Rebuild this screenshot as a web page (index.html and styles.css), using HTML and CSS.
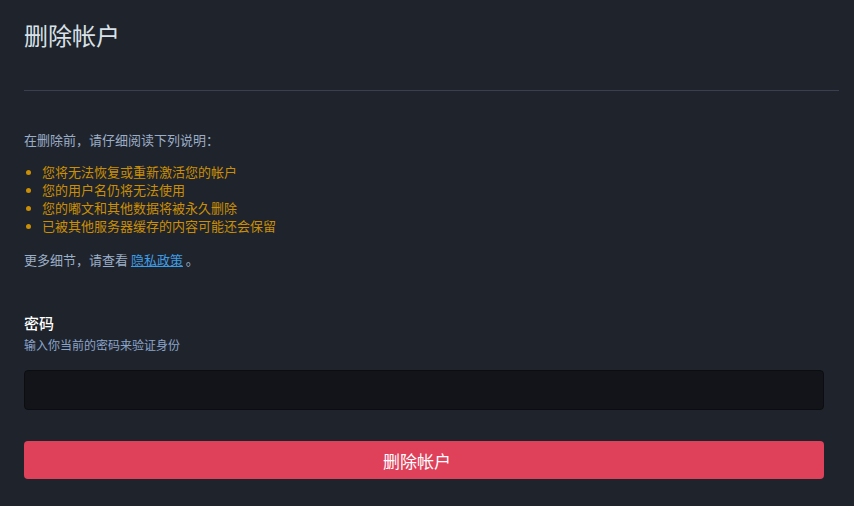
FILE: index.html
```html
<!DOCTYPE html>
<html lang="zh-CN">
<head>
<meta charset="utf-8">
<title>删除帐户</title>
<link rel="stylesheet" href="styles.css">
</head>
<body>
<div class="page">
  <h2 class="title">删除帐户</h2>
  <hr class="divider">
  <p class="intro">在删除前，请仔细阅读下列说明：</p>
  <ul class="warnings">
    <li>您将无法恢复或重新激活您的帐户</li>
    <li>您的用户名仍将无法使用</li>
    <li>您的嘟文和其他数据将被永久删除</li>
    <li>已被其他服务器缓存的内容可能还会保留</li>
  </ul>
  <p class="more">更多细节，请查看 <a href="#" class="link">隐私政策</a> 。</p>
  <form class="form">
    <label class="label">密码</label>
    <div class="hint">输入你当前的密码来验证身份</div>
    <input class="input" type="password">
    <button class="btn" type="button">删除帐户</button>
  </form>
</div>
</body>
</html>
```
FILE: styles.css
```css
html, body {
  margin: 0;
  padding: 0;
  background: #1f232b;
}
body {
  font-family: "Noto Sans CJK SC", "Noto Sans", sans-serif;
  color: #d9e1e8;
}
.page {
  padding: 19px 15px 0 24px;
}
.title {
  margin: 0;
  font-size: 24px;
  line-height: 32px;
  font-weight: 400;
  color: #d9e1e8;
}
.divider {
  margin: 39px 0 0 0;
  border: 0;
  height: 1px;
  background: #393f4f;
}
.intro {
  margin: 40px 0 0 0;
  font-size: 13px;
  line-height: 18px;
  color: #9baec8;
}
.warnings {
  margin: 14px 0 0 0;
  padding: 0 0 0 18px;
  font-size: 13px;
  line-height: 18px;
  color: #ca8f04;
}
.warnings li::marker {
  font-size: 12px;
}
.more {
  margin: 16px 0 0 0;
  font-size: 13px;
  line-height: 18px;
  color: #9baec8;
}
.link {
  color: #3e9ce6;
  text-decoration: underline;
}
.form {
  display: flex;
  flex-direction: column;
  margin-top: 44px;
  width: 800px;
}
.label {
  font-size: 15px;
  line-height: 20px;
  font-weight: 500;
  color: #ffffff;
}
.hint {
  margin-top: 4px;
  font-size: 12px;
  line-height: 16px;
  color: #8aa5cc;
}
.input {
  box-sizing: border-box;
  margin-top: 17px;
  height: 40px;
  background: #131419;
  border: 1px solid #0c0d10;
  border-radius: 4px;
  outline: none;
}
.btn {
  box-sizing: border-box;
  margin-top: 31px;
  height: 38px;
  background: #df405a;
  border: 0;
  border-radius: 4px;
  color: #ffffff;
  font-family: "Noto Sans CJK SC", "Noto Sans", sans-serif;
  font-size: 17px;
  font-weight: 400;
  padding: 0 14px 0 0;
}
```
